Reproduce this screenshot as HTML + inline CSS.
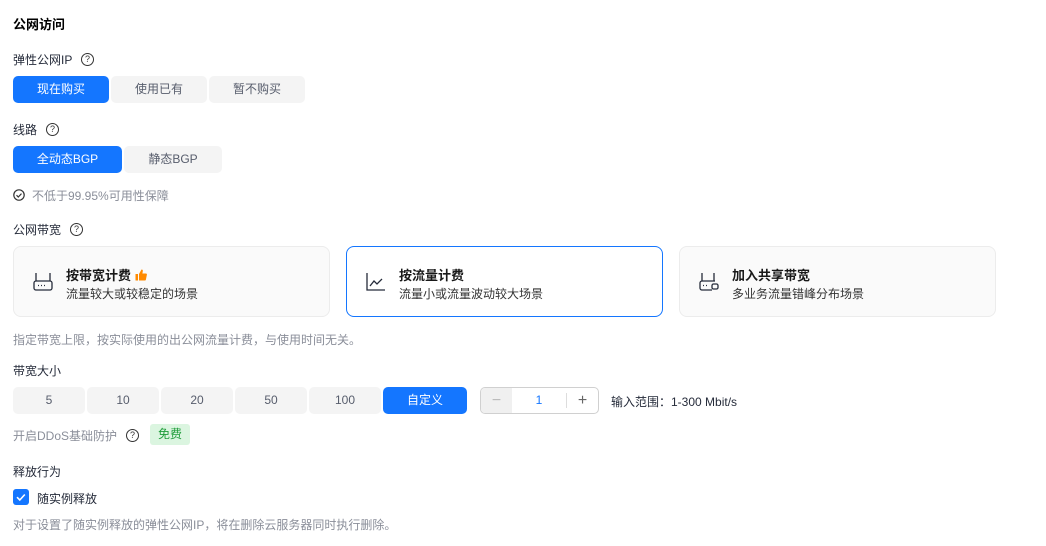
<!DOCTYPE html><html><head><meta charset="utf-8"><style>
body{margin:0;width:1046px;height:546px;background:#fff;font-family:"Liberation Sans","Noto Sans CJK SC",sans-serif;font-size:12px;color:#252b3a;position:relative;overflow:hidden}
.a{position:absolute;white-space:nowrap}
.b{position:absolute;height:27px;line-height:27px;text-align:center;background:#f4f4f4;border-radius:5px;color:#575d6c;font-size:12px}
.on{background:#1476ff;color:#fff}
.q{position:absolute;width:11px;height:11px;border:1.2px solid #333;border-radius:50%;font-size:9px;line-height:11px;text-align:center;color:#333}
.card{position:absolute;top:246px;width:315px;height:69px;border:1px solid #ececec;border-radius:8px;background:#fafafa}
.card .t{position:absolute;left:52px;top:18px;font-size:13px;font-weight:bold;color:#191919}
.card .s{position:absolute;left:52px;top:38px;font-size:12px;color:#333}
.card .ic{position:absolute;left:18px;top:24px}
.g{color:#8a8e99}
</style></head><body>
<div class="a" style="left:13px;top:14px;font-size:13px;font-weight:bold;color:#000">公网访问</div>
<div class="a" style="left:13px;top:51px">弹性公网IP</div><div class="q" style="left:81px;top:53px">?</div>
<div class="b on" style="left:13px;top:76px;width:96px">现在购买</div>
<div class="b" style="left:111px;top:76px;width:96px">使用已有</div>
<div class="b" style="left:209px;top:76px;width:96px">暂不购买</div>
<div class="a" style="left:13px;top:121px">线路</div><div class="q" style="left:46px;top:123px">?</div>
<div class="b on" style="left:13px;top:146px;width:109px">全动态BGP</div>
<div class="b" style="left:124px;top:146px;width:98px">静态BGP</div>
<svg class="a" style="left:13px;top:189px" width="12" height="12" viewBox="0 0 12 12" fill="none" stroke="#333" stroke-width="1.2"><circle cx="6" cy="6" r="5.2"/><path d="M3.5 6.2l1.8 1.8 3.2-3.4"/></svg>
<div class="a g" style="left:32px;top:187px">不低于99.95%可用性保障</div>
<div class="a" style="left:13px;top:221px">公网带宽</div><div class="q" style="left:70px;top:223px">?</div>
<div class="card" style="left:13px"><svg class="ic" width="22" height="22" viewBox="0 0 22 22" fill="none" stroke="#252b3a" stroke-width="1.3"><path d="M4 2v8M18 2v8"/><rect x="2" y="10" width="18" height="9" rx="2"/><path d="M6 14.5h1M9 14.5h1M12 14.5h1"/></svg><div class="t">按带宽计费 <svg width="12" height="12" viewBox="0 0 12 12" style="vertical-align:-1px"><rect x="0.5" y="5" width="2.5" height="6.5" fill="#ff8a00"/><path d="M4 5l2.5-4.5c1 0 1.5.6 1.3 1.6L7.4 4.5H11c.6 0 1 .5.9 1.1l-1 5c-.1.5-.5.9-1 .9H4z" fill="#ff8a00"/></svg></div><div class="s">流量较大或较稳定的场景</div></div>
<div class="card" style="left:346px;background:#fff;border-color:#1476ff"><svg class="ic" width="22" height="22" viewBox="0 0 22 22" fill="none" stroke="#252b3a" stroke-width="1.3"><path d="M2 2v17h18"/><path d="M5 15l4-5 3 3 5-5"/></svg><div class="t">按流量计费</div><div class="s">流量小或流量波动较大场景</div></div>
<div class="card" style="left:679px"><svg class="ic" width="22" height="22" viewBox="0 0 22 22" fill="none" stroke="#252b3a" stroke-width="1.3"><path d="M4 2v8M16 2v8"/><path d="M14 19H4a2 2 0 0 1-2-2v-5a2 2 0 0 1 2-2h13"/><path d="M5 14.5h1M8 14.5h1"/><rect x="14" y="13" width="6" height="5" rx="1.5"/></svg><div class="t">加入共享带宽</div><div class="s">多业务流量错峰分布场景</div></div>
<div class="a g" style="left:13px;top:331px">指定带宽上限，按实际使用的出公网流量计费，与使用时间无关。</div>
<div class="a" style="left:13px;top:362px">带宽大小</div>
<div class="b" style="left:13px;top:387px;width:72px">5</div>
<div class="b" style="left:87px;top:387px;width:72px">10</div>
<div class="b" style="left:161px;top:387px;width:72px">20</div>
<div class="b" style="left:235px;top:387px;width:72px">50</div>
<div class="b" style="left:309px;top:387px;width:72px">100</div>
<div class="b on" style="left:383px;top:387px;width:84px">自定义</div>
<div class="a" style="left:480px;top:387px;width:117px;height:25px;border:1px solid #d0d0d0;border-radius:5px;overflow:hidden">
<div class="a" style="left:0;top:0;width:31px;height:25px;background:#f0f0f0;color:#bbb;text-align:center;line-height:25px;font-size:16px">−</div>
<div class="a" style="left:31px;top:0;width:54px;height:25px;text-align:center;line-height:25px;color:#1476ff">1</div>
<div class="a" style="left:85px;top:5px;width:1px;height:15px;background:#ddd"></div>
<div class="a" style="left:86px;top:0;width:31px;height:25px;text-align:center;line-height:25px;color:#666;font-size:16px">+</div></div>
<div class="a" style="left:611px;top:393px;font-size:12px">输入范围：1-300 Mbit/s</div>
<div class="a g" style="left:13px;top:427px">开启DDoS基础防护</div><div class="q" style="left:126px;top:429px">?</div>
<div class="a" style="left:150px;top:424px;width:40px;height:21px;line-height:21px;text-align:center;background:#dbf5e0;color:#1f9d3a;border-radius:3px">免费</div>
<div class="a" style="left:13px;top:463px">释放行为</div>
<svg class="a" style="left:13px;top:489px" width="16" height="16" viewBox="0 0 16 16"><rect width="16" height="16" rx="3" fill="#1476ff"/><path d="M4 8.2l2.8 2.8 5-5.5" fill="none" stroke="#fff" stroke-width="1.6"/></svg>
<div class="a" style="left:37px;top:490px">随实例释放</div>
<div class="a g" style="left:13px;top:516px">对于设置了随实例释放的弹性公网IP，将在删除云服务器同时执行删除。</div>
</body></html>
